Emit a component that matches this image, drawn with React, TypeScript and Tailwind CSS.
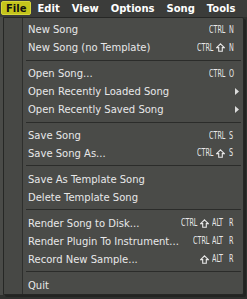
import { Fragment } from "react";

type Item =
  | { kind: "sep" }
  | { kind: "item"; label: string; mods?: string[]; keyName?: string; submenu?: boolean };

const menuBar = ["File", "Edit", "View", "Options", "Song", "Tools"];

const items: Item[] = [
  { kind: "item", label: "New Song", mods: ["CTRL"], keyName: "N" },
  { kind: "item", label: "New Song (no Template)", mods: ["CTRL", "SHIFT"], keyName: "N" },
  { kind: "sep" },
  { kind: "item", label: "Open Song...", mods: ["CTRL"], keyName: "O" },
  { kind: "item", label: "Open Recently Loaded Song", submenu: true },
  { kind: "item", label: "Open Recently Saved Song", submenu: true },
  { kind: "sep" },
  { kind: "item", label: "Save Song", mods: ["CTRL"], keyName: "S" },
  { kind: "item", label: "Save Song As...", mods: ["CTRL", "SHIFT"], keyName: "S" },
  { kind: "sep" },
  { kind: "item", label: "Save As Template Song" },
  { kind: "item", label: "Delete Template Song" },
  { kind: "sep" },
  { kind: "item", label: "Render Song to Disk...", mods: ["CTRL", "SHIFT", "ALT"], keyName: "R" },
  { kind: "item", label: "Render Plugin To Instrument...", mods: ["CTRL", "ALT"], keyName: "R" },
  { kind: "item", label: "Record New Sample...", mods: ["SHIFT", "ALT"], keyName: "R" },
  { kind: "sep" },
  { kind: "item", label: "Quit" },
];

function ShiftArrow() {
  return (
    <svg width="9" height="9" viewBox="0 0 9 9" className="block">
      <path
        d="M4.5 0.8 L8.3 4.6 H6.3 V8.3 H2.7 V4.6 H0.7 Z"
        fill="none"
        stroke="#e8e8e8"
        strokeWidth="1.1"
        strokeLinejoin="miter"
      />
    </svg>
  );
}

function Narrow({ text, className }: { text: string; className: string }) {
  return (
    <span className={`inline-block whitespace-nowrap ${className}`}>
      <span className="inline-block origin-left scale-x-[0.64]">{text}</span>
    </span>
  );
}

function Shortcut({ mods, keyName }: { mods: string[]; keyName: string }) {
  return (
    <span className="flex items-center text-[10px] leading-none">
      <span className="flex items-center gap-[3px]">
        {mods.map((m) =>
          m === "SHIFT" ? (
            <ShiftArrow key={m} />
          ) : m === "CTRL" ? (
            <Narrow key={m} text="CTRL" className="w-[16px]" />
          ) : (
            <Narrow key={m} text="ALT" className="w-[13px]" />
          ),
        )}
      </span>
      <Narrow text={keyName} className="ml-[4px] w-[6px]" />
    </span>
  );
}

export default function App() {
  return (
    <div className="relative h-[299px] w-[247px] overflow-hidden bg-[#2f302e] font-['DejaVu_Sans',sans-serif] text-[10px] text-[#e8e8e8]">
      <div className="flex h-[17px] items-start bg-[#3b3c3a] pl-[1px] pt-[1px]">
        {menuBar.map((m, i) => (
          <div
            key={m}
            className={
              i === 0
                ? "flex h-[14px] items-center rounded-[2px] border border-[#d6d63a] bg-[#c4c41c] px-[4px] font-bold text-[#111]"
                : "flex h-[14px] items-center px-[6px] font-bold text-white"
            }
          >
            {m}
          </div>
        ))}
      </div>

      <div className="flex">
        <div className="w-[3px] self-stretch bg-[#4a4b48]" />
        <div className="flex h-[278px] w-[241px] rounded-[2px] border border-[#262725] bg-[#4a4b48] shadow-[2px_2px_0_#232422]">
          <div className="w-[19px] border-r border-[#2e2f2d] bg-[#474845]" />
          <div className="flex flex-1 flex-col pt-[3px]">
            {items.map((it, i) => (
              <Fragment key={i}>
                {it.kind === "sep" ? (
                  <div className="ml-[3px] mr-[2px] mt-[3px] mb-[4px] h-px bg-[#2b2c2a]" />
                ) : (
                  <div className="flex h-[18px] items-center pl-[5px] pr-[8px]">
                    <span className="flex-1 whitespace-nowrap">{it.label}</span>
                    {it.mods && it.keyName ? <Shortcut mods={it.mods} keyName={it.keyName} /> : null}
                    {it.submenu ? (
                      <svg width="4" height="7" viewBox="0 0 4 7" className="-mr-[4px]">
                        <path d="M0 0 L4 3.5 L0 7 Z" fill="#dcdcdc" />
                      </svg>
                    ) : null}
                  </div>
                )}
              </Fragment>
            ))}
          </div>
        </div>
      </div>
    </div>
  );
}
